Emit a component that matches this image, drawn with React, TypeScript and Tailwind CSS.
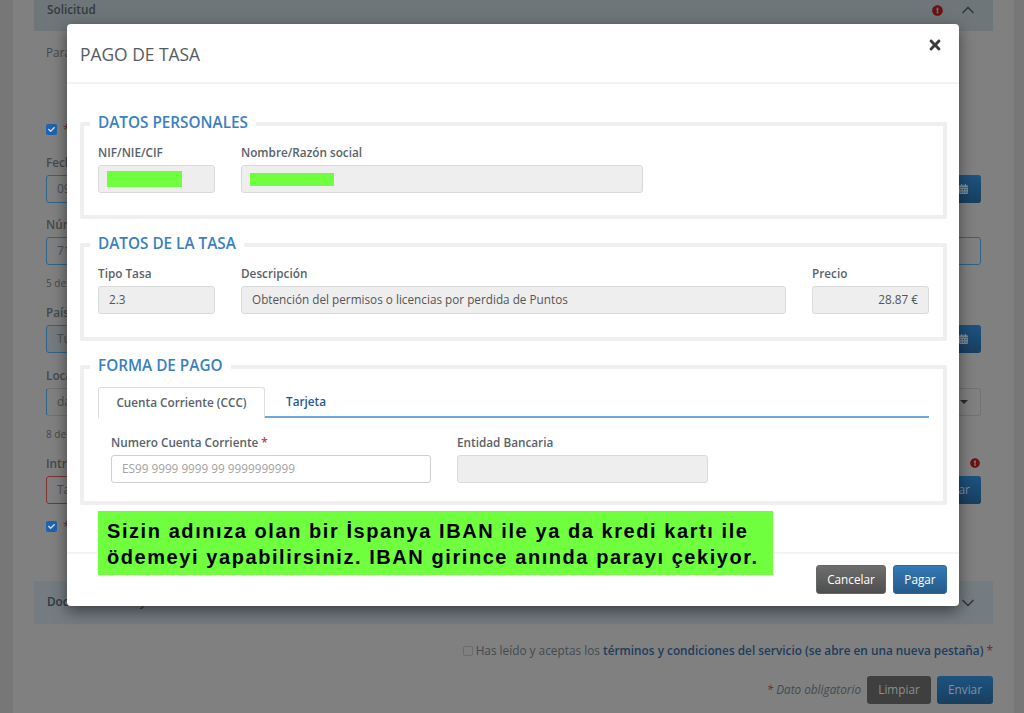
import React from 'react';
import { ChevronDown, ChevronUp } from 'lucide-react';
import { FaCalendarAlt, FaCheck, FaExclamationCircle, FaTimes } from 'react-icons/fa';

function BgCheck() {
  return (
    <div className="flex items-center gap-[6px] h-[11px]">
      <span className="w-[11px] h-[11px] rounded-[2px] bg-[#1d63b0] flex items-center justify-center">
        <FaCheck className="w-[7px] h-[7px] text-[#d8d8d8]" />
      </span>
      <span className="text-[12px] text-[#6e2a2a]">*</span>
    </div>
  );
}

function BgInput({ text, button, className }: { text: string; button?: React.ReactNode; className?: string }) {
  return (
    <div className={`flex h-[28px] rounded-[3px] border pl-[10px] items-center justify-between text-[12px] text-[#454f56] ${className}`}>
      <span>{text}</span>
      {button}
    </div>
  );
}

function CalendarButton() {
  return (
    <span className="-mr-px w-[40px] h-[28px] rounded-r-[3px] bg-gradient-to-b from-[#1d5380] to-[#183f5f] flex items-center justify-center">
      <FaCalendarAlt className="ml-[4px] w-[9px] h-[10px] text-[#80909c]" />
    </span>
  );
}

function Background() {
  return (
    <div className="h-[713px] flex bg-[#808080] text-[#444a4e] text-[11.76px]">
      <div className="w-[13px] bg-[#777777]" />
      <div className="flex-1 px-[21px]">
        <div className="-mt-[15px] h-[46px] bg-[#6f767a] flex items-end justify-between pb-[11px] pl-[13px] pr-[15px]">
          <span className="mb-[2px] font-semibold text-[#33393d] leading-[18px]">Solicitud</span>
          <div className="flex items-center gap-[15px]">
            <FaExclamationCircle className="w-[11px] h-[11px] text-[#6b1212]" />
            <ChevronUp className="w-[20px] h-[20px] text-[#33393d]" />
          </div>
        </div>
        <div className="px-[12px]">
          <p className="mt-[12px] leading-[18px]">Para</p>
          <div className="mt-[63px]"><BgCheck /></div>
          <p className="mt-[18px] font-semibold leading-[18px]">Fecha</p>
          <BgInput text="09" className="mt-[4px] border-[#2f6488]" button={<CalendarButton />} />
          <p className="mt-[12px] font-semibold leading-[18px]">Número</p>
          <BgInput text="71" className="mt-[4px] border-[#2f6488]" />
          <p className="mt-[10px] text-[10px] leading-[16px]">5 de</p>
          <p className="mt-[12px] font-semibold leading-[18px]">País</p>
          <BgInput text="Tu" className="mt-[4px] border-[#2f6488] bg-[#777b7d]" button={<CalendarButton />} />
          <p className="mt-[13px] font-semibold leading-[18px]">Localidad</p>
          <BgInput
            text="da"
            className="mt-[4px] border-[#2f6488] !border-r-[#727272] !border-y-[#727272]"
            button={<span className="mr-[12px] w-0 h-0 border-x-[4px] border-x-transparent border-t-[4px] border-t-[#2b2b2b]" />}
          />
          <p className="mt-[10px] text-[10px] leading-[16px]">8 de</p>
          <div className="mt-[12px] flex items-center justify-between">
            <span className="font-semibold leading-[18px]">Intr</span>
            <FaExclamationCircle className="mr-[1px] w-[10px] h-[10px] text-[#6b1212]" />
          </div>
          <BgInput
            text="Ta"
            className="mt-[4px] border-[#7d3434]"
            button={
              <span className="-mr-px w-[40px] h-[28px] rounded-r-[3px] bg-gradient-to-b from-[#1d5380] to-[#183f5f] text-[#80909c] flex items-center justify-end pr-[11px]">
                ar
              </span>
            }
          />
          <div className="mt-[17px]"><BgCheck /></div>
        </div>
        <div className="mt-[49px] h-[43px] bg-[#747c81] flex items-center justify-between pl-[13px] pr-[15px]">
          <span className="mb-[2px] font-semibold text-[#33393d]">Documentación y anexos</span>
          <ChevronDown className="w-[20px] h-[20px] text-[#33393d]" />
        </div>
        <div className="mt-[18px] h-[18px] flex items-center justify-end gap-[3px] whitespace-nowrap text-[11.82px]">
          <span className="w-[10px] h-[10px] rounded-[2px] border border-[#6c6c6c]" />
          <span>
            Has leído y aceptas los{' '}
            <span className="font-semibold text-[#1d3c5c]">términos y condiciones del servicio (se abre en una nueva pestaña)</span>{' '}
            <span className="text-[#6e2a2a]">*</span>
          </span>
        </div>
        <div className="mt-[16px] flex items-center justify-end gap-[6px]">
          <span className="italic">
            <span className="text-[#6e2a2a]">*</span> Dato obligatorio
          </span>
          <span className="w-[64px] h-[28px] rounded-[3px] bg-[#3f3f3f] text-[#8d8d8d] flex items-center justify-center">Limpiar</span>
          <span className="w-[56px] h-[28px] rounded-[3px] bg-gradient-to-b from-[#1d5380] to-[#183f5f] text-[#80909c] flex items-center justify-center">Enviar</span>
        </div>
      </div>
      <div className="w-[10px] bg-[#777777]" />
    </div>
  );
}

function Field({ label, value, width, right, required, redact, plain }: {
  label: string;
  value?: string;
  width: string;
  right?: boolean;
  required?: boolean;
  redact?: string;
  plain?: string;
}) {
  return (
    <div className={width}>
      <label className="block font-semibold leading-[18px] text-[#58616a]">
        {label} {required && <span className="text-[#a94442]">*</span>}
      </label>
      <div
        className={`mt-[4px] h-[28px] rounded-[3px] border px-[10px] flex items-center ${
          plain !== undefined ? 'bg-white border-[#cfcfcf] text-[#a3a3a3]' : 'bg-[#eeeeee] border-[#d9dadb] text-[#555555]'
        } ${right ? 'justify-end' : ''}`}
      >
        {redact && <span className={`block bg-[#6fff3f] ${redact}`} />}
        {value}
        {plain}
      </div>
    </div>
  );
}

function Section({ title, children }: { title: string; children: React.ReactNode }) {
  return (
    <fieldset className="border-4 border-[#efefef] rounded-[2px] px-[14px]">
      <legend className="px-[8px] -ml-[8px] pb-[4px] text-[15.3px] font-semibold leading-[22px] text-[#3a7fc1]">{title}</legend>
      {children}
    </fieldset>
  );
}

function Modal() {
  return (
    <div className="absolute left-[67px] top-[24px] w-[892px] h-[582px] rounded-[4px] bg-white shadow-[0_5px_15px_rgba(0,0,0,0.5)] flex flex-col text-[11.76px]">
      <div className="h-[60px] shrink-0 border-b-2 border-[#f3f3f3] pl-[13px] pr-[17px] flex items-center justify-between">
        <h4 className="text-[17.4px] leading-[20px] text-[#555b61] mt-[2px]">PAGO DE TASA</h4>
        <FaTimes className="w-[14px] h-[16px] -mt-[16px] text-[#3a3a3a]" />
      </div>
      <div className="flex-1 pl-[13px] pr-[12px] pt-[27px] flex flex-col gap-[13px]">
        <Section title="DATOS PERSONALES">
          <div className="flex gap-[26px] pt-[6px] pb-[22px]">
            <Field label="NIF/NIE/CIF" width="w-[117px]" redact="w-[75px] h-[16px] -ml-[2px]" />
            <Field label="Nombre/Razón social" width="w-[402px]" redact="w-[84px] h-[13px] -ml-[2px]" />
          </div>
        </Section>
        <Section title="DATOS DE LA TASA">
          <div className="flex gap-[26px] pt-[6px] pb-[23px]">
            <Field label="Tipo Tasa" value="2.3" width="w-[117px]" />
            <Field label="Descripción" value="Obtención del permisos o licencias por perdida de Puntos" width="w-[545px]" />
            <Field label="Precio" value="28.87 €" width="w-[117px]" right />
          </div>
        </Section>
        <Section title="FORMA DE PAGO">
          <div className="mt-[7px] flex h-[31px] border-b-2 border-[#6fa8dc]">
            <span className="w-[167px] h-[31px] rounded-t-[3px] border border-b-0 border-[#dddddd] bg-white font-semibold text-[#58616a] flex items-center justify-center">
              Cuenta Corriente (CCC)
            </span>
            <span className="ml-[21px] h-[30px] font-semibold text-[#1c5a96] flex items-center">Tarjeta</span>
          </div>
          <div className="flex gap-[26px] pt-[15px] pb-[18px] pl-[13px]">
            <Field label="Numero Cuenta Corriente" required plain="ES99 9999 9999 99 9999999999" width="w-[320px]" />
            <Field label="Entidad Bancaria" value="" width="w-[251px]" />
          </div>
        </Section>
      </div>
      <div className="h-[54px] shrink-0 border-t-2 border-[#f3f3f3] pr-[12px] pt-[11px] flex justify-end gap-[7px] text-white">
        <button className="w-[70px] h-[29px] rounded-[3px] border border-[#666666] bg-gradient-to-b from-[#6e6e6e] to-[#4f4f4f]">Cancelar</button>
        <button className="w-[54px] h-[29px] rounded-[3px] border border-[#2c6aa0] bg-gradient-to-b from-[#337ab7] to-[#265a88]">Pagar</button>
      </div>
      {/* green annotation pasted on top of the dialog */}
      <div className="absolute left-[31px] top-[487px] w-[675px] h-[64px] bg-[#6fff3f] pl-[9px] pt-[8px] font-['Liberation_Sans',Arial,sans-serif] font-bold text-[20px] leading-[25.5px] tracking-[1.57px] text-black whitespace-nowrap">
        Sizin adınıza olan bir İspanya IBAN ile ya da kredi kartı ile
        <br />
        ödemeyi yapabilirsiniz. IBAN girince anında parayı çekiyor.
      </div>
    </div>
  );
}

export default function App() {
  return (
    <div className="relative w-[1024px] h-[713px] overflow-hidden font-['Open_Sans',sans-serif]">
      <Background />
      <Modal />
    </div>
  );
}
